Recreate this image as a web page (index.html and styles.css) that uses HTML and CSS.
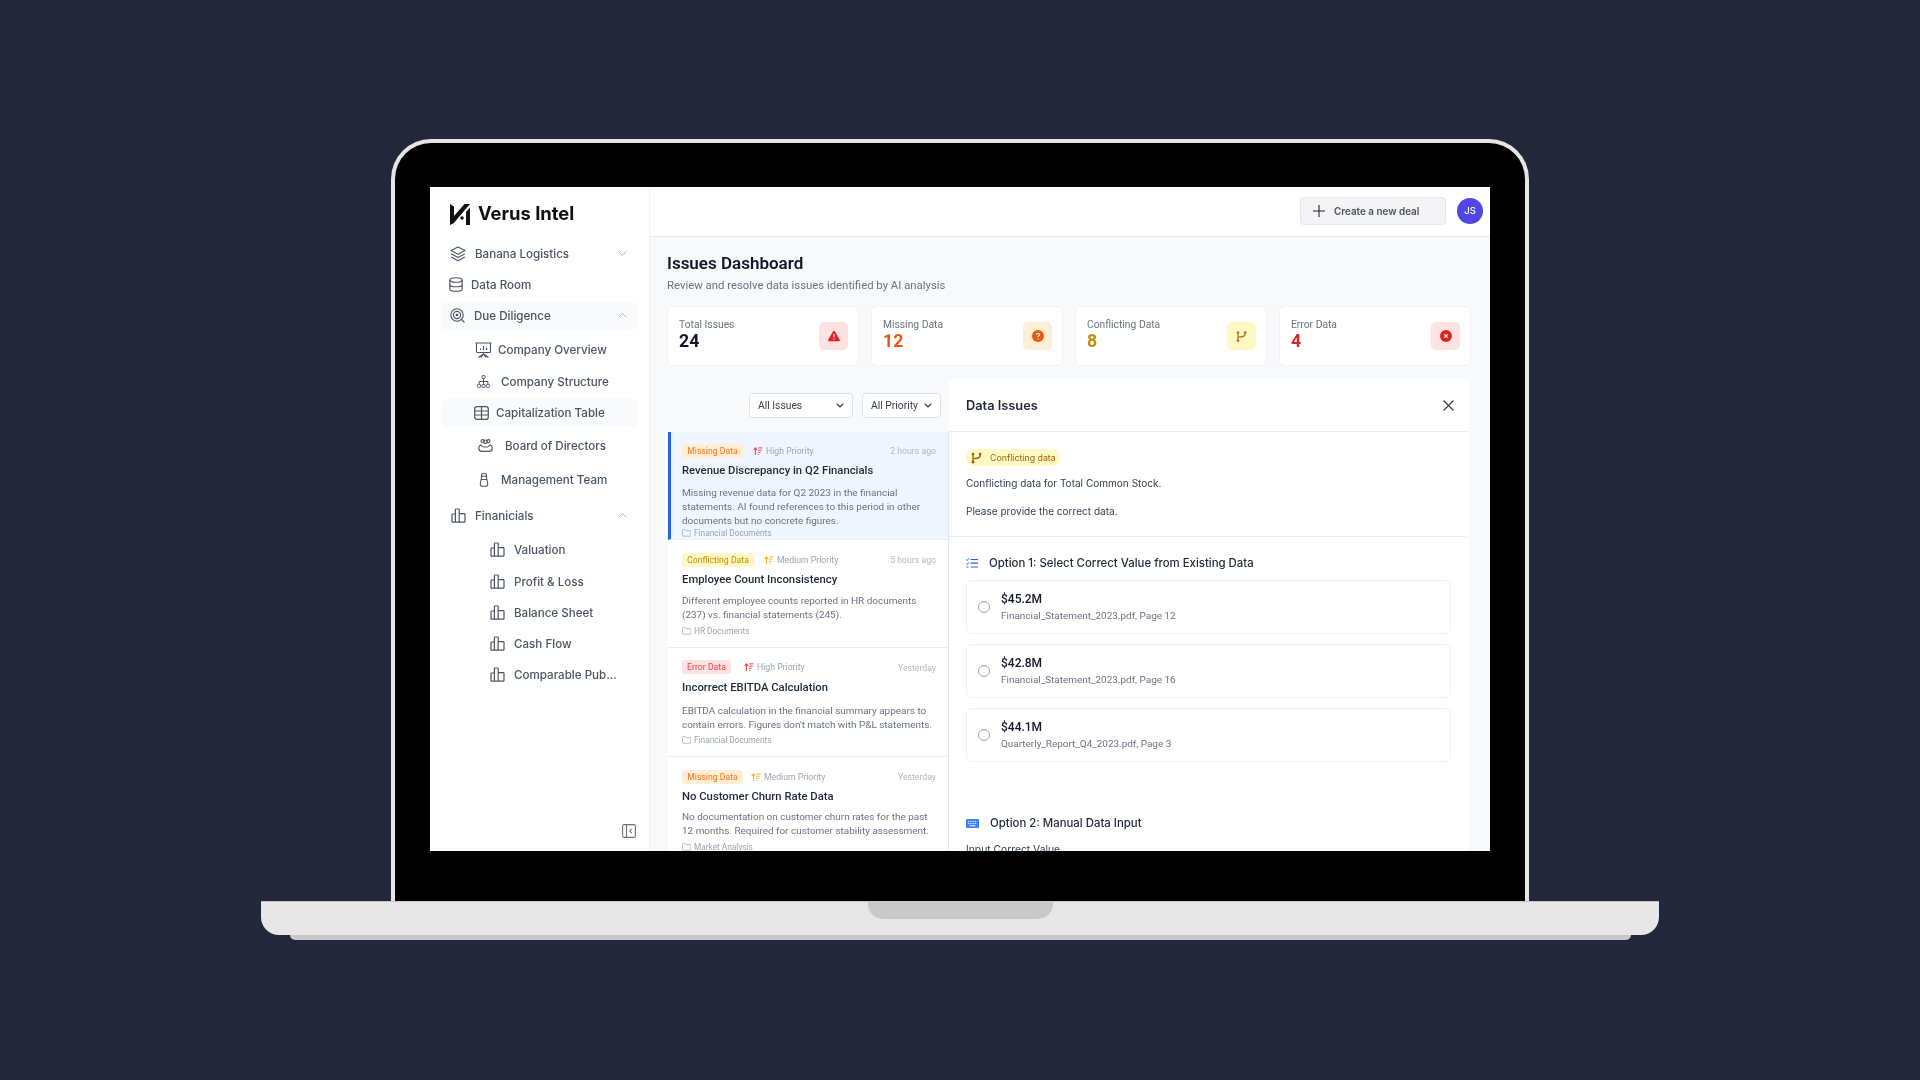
FILE: index.html
```html
<!DOCTYPE html>
<html lang="en">
<head>
<meta charset="utf-8">
<title>Verus Intel – Issues Dashboard</title>
<link rel="stylesheet" href="styles.css">
</head>
<body>
<svg class="defs" aria-hidden="true">
  <symbol id="i-bars" viewBox="0 0 15 15"><path d="M1 14.2V6.6c0-.4.2-.6.6-.6h2.2c.4 0 .6.2.6.6v7.6M4.4 14.2V1.6c0-.4.2-.6.6-.6h2.6c.4 0 .6.2.6.6v12.6M8.2 14.2V5.6h5c.5 0 .8.3.8.8v7.2c0 .4-.2.6-.6.6H1.6c-.4 0-.6-.2-.6-.6" fill="none" stroke="currentColor" stroke-width="1.2" stroke-linejoin="round"/></symbol>
  <symbol id="i-prio" viewBox="0 0 11 9"><path d="M2.6 9V1.5M.6 3.4 2.6 1l2 2.4" fill="none" stroke="currentColor" stroke-width="1.2"/><path d="M5.6 1h5M5.6 3.6h4M5.6 6.1h2.8M5.6 8.4h1.3" fill="none" stroke="currentColor" stroke-width="1.1"/></symbol>
  <symbol id="i-folder" viewBox="0 0 9 8"><path d="M.5 1.3c0-.4.3-.7.7-.7h2l.9 1h4c.4 0 .7.3.7.7v4.2c0 .4-.3.7-.7.7H1.2c-.4 0-.7-.3-.7-.7z" fill="none" stroke="currentColor" stroke-width=".7"/></symbol>
  <symbol id="i-branch" viewBox="0 0 12 13"><circle cx="2.2" cy="2.2" r="1.5"/><circle cx="2.2" cy="11" r="1.5"/><circle cx="10" cy="2.2" r="1.5"/><path d="M2.2 3v7M10 3c0 2.6-1.2 3.6-3.4 3.8L2.2 7.2" fill="none" stroke="currentColor" stroke-width="1.5"/></symbol>
</svg>

<div class="laptop">
  <div class="lid">
    <div class="screen">
      <aside class="sidebar">
        <div class="brand">
          <svg class="logo" viewBox="0 0 20 21"><path d="M0 0 4 2.4V12L14.5 0H20L3.6 19.2 0 21z" fill="#111"/><path d="M20 3.4V21h-4V8z" fill="#111"/><circle cx="12" cy="14" r="1.8" fill="#111"/></svg>
          <span class="brand-name">Verus Intel</span>
        </div>
        <nav class="nav">
          <div class="row pl9 g9">
            <svg class="ic w16" viewBox="0 0 16 16"><path d="M8 1 15 4.6 8 8.2 1 4.6zM1.2 7.8 8 11.4l6.8-3.6M1.2 11 8 14.8l6.8-3.8" fill="none" stroke="currentColor" stroke-width="1.1" stroke-linejoin="round"/></svg>
            <span>Banana Logistics</span>
            <svg class="chev" viewBox="0 0 9 5"><path d="M.5.5 4.5 4.5 8.5.5" fill="none" stroke="currentColor" stroke-width=".8"/></svg>
          </div>
          <div class="row pl8 g8">
            <svg class="ic w14" viewBox="0 0 14 15"><ellipse cx="7" cy="3" rx="6.2" ry="2.3" fill="none" stroke="currentColor" stroke-width="1.1"/><path d="M.8 3v9c0 1.3 2.8 2.3 6.2 2.3s6.200-1 6.200-2.300V3M.8 7.500c0 1.300 2.800 2.300 6.200 2.300s6.200-1 6.200-2.300" fill="none" stroke="currentColor" stroke-width="1.1"/></svg>
            <span>Data Room</span>
          </div>
          <div class="row pl9 g9 active">
            <svg class="ic w15" viewBox="0 0 15 15"><circle cx="7" cy="7" r="6.200" fill="none" stroke="currentColor" stroke-width="1.100"/><circle cx="7" cy="7" r="3.600" fill="none" stroke="currentColor" stroke-width="1.100"/><circle cx="7" cy="7" r="1.300" fill="currentColor"/><path d="m11.500 11.500 3 3" stroke="currentColor" stroke-width="1.100"/></svg>
            <span>Due Diligence</span>
            <svg class="chev" viewBox="0 0 9 5"><path d="M.5 4.500 4.500.5l4 4" fill="none" stroke="currentColor" stroke-width=".8"/></svg>
          </div>
          <div class="row pl34 g6 m6">
            <svg class="ic w17" viewBox="0 0 17 16"><path d="M.5 1h16M1.500 1v8.500c0 .6.400 1 1 1h12c.6 0 1-.4 1-1V1M8.500 10.500V12M3.500 15.500l5-3.500 5 3.500M6 15.500l2.500-3.500 2.500 3.500" fill="none" stroke="currentColor" stroke-width="1.100"/><path d="M5.500 8V6.500M8.500 8V4M11.500 8V5.500" fill="none" stroke="currentColor" stroke-width="1.200"/></svg>
            <span>Company Overview</span>
          </div>
          <div class="row pl36 g11 m4">
            <svg class="ic w13" viewBox="0 0 13 13"><rect x="5" y=".6" width="3" height="3" rx=".8" fill="none" stroke="currentColor"/><rect x=".6" y="9.400" width="3" height="3" rx=".8" fill="none" stroke="currentColor"/><rect x="5" y="9.400" width="3" height="3" rx=".8" fill="none" stroke="currentColor"/><rect x="9.400" y="9.400" width="3" height="3" rx=".8" fill="none" stroke="currentColor"/><path d="M6.500 3.600v5.800M2.100 9.400V6.500h8.800v2.900" fill="none" stroke="currentColor"/></svg>
            <span>Company Structure</span>
          </div>
          <div class="row pl33 g7 active">
            <svg class="ic w15" viewBox="0 0 15 14"><rect x=".7" y=".7" width="13.600" height="12.600" rx="2.200" fill="none" stroke="currentColor" stroke-width="1.200"/><path d="M.7 5h13.600M.7 9h13.600M7.500 .7v12.600" fill="none" stroke="currentColor" stroke-width="1.200"/></svg>
            <span>Capitalization Table</span>
          </div>
          <div class="row pl37 g12 m5">
            <svg class="ic w15" viewBox="0 0 15 13"><circle cx="4.600" cy="2.200" r="1.600" fill="none" stroke="currentColor" stroke-width="1.100"/><circle cx="10.400" cy="2.200" r="1.600" fill="none" stroke="currentColor" stroke-width="1.100"/><circle cx="7.500" cy="2.800" r="1.800" fill="none" stroke="currentColor" stroke-width="1.100"/><path d="M3 5.800C1.500 6.600.6 8 .8 9.600c.2 1.700 1.600 2.800 3.200 2.800h7c1.600 0 3-1.100 3.200-2.800.2-1.600-.7-3-2.200-3.800-.9.800-1.600 2.200-2.500 2.200H5.500C4.600 8 3.900 6.600 3 5.800z" fill="none" stroke="currentColor" stroke-width="1.100" stroke-linejoin="round"/></svg>
            <span>Board of Directors</span>
          </div>
          <div class="row pl38 g12 m6">
            <svg class="ic w10" viewBox="0 0 10 14"><path d="M2.800.7h4.400l.3 2.600h-5zM2.700 3.300 1.300 11c-.2 1.300.6 2.300 1.800 2.300h3.800c1.200 0 2-1 1.800-2.300L7.300 3.300M2.200 6.500h5.600" fill="none" stroke="currentColor" stroke-width="1.100" stroke-linejoin="round"/></svg>
            <span>Management Team</span>
          </div>
          <div class="row pl10 g9 m8">
            <svg class="ic w15" viewBox="0 0 15 15"><use href="#i-bars"/></svg>
            <span>Finanicials</span>
            <svg class="chev" viewBox="0 0 9 5"><path d="M.5 4.500 4.500.5l4 4" fill="none" stroke="currentColor" stroke-width=".8"/></svg>
          </div>
          <div class="row pl49 g9 m6"><svg class="ic w15" viewBox="0 0 15 15"><use href="#i-bars"/></svg><span>Valuation</span></div>
          <div class="row pl49 g9 m4"><svg class="ic w15" viewBox="0 0 15 15"><use href="#i-bars"/></svg><span>Profit &amp; Loss</span></div>
          <div class="row pl49 g9"><svg class="ic w15" viewBox="0 0 15 15"><use href="#i-bars"/></svg><span>Balance Sheet</span></div>
          <div class="row pl49 g9"><svg class="ic w15" viewBox="0 0 15 15"><use href="#i-bars"/></svg><span>Cash Flow</span></div>
          <div class="row pl49 g9"><svg class="ic w15" viewBox="0 0 15 15"><use href="#i-bars"/></svg><span>Comparable Pub...</span></div>
        </nav>
        <svg class="collapse" viewBox="0 0 14 14"><rect x=".6" y=".6" width="12.800" height="12.800" rx="1.500" fill="none" stroke="currentColor" stroke-width="1.100"/><path d="M4.500.6v12.800M9.800 4.800 7.800 7l2 2.200" fill="none" stroke="currentColor" stroke-width="1.100"/></svg>
      </aside>

      <div class="content">
        <header class="topbar">
          <button class="new-deal">
            <svg class="plus" viewBox="0 0 12 12"><path d="M6 0v12M0 6h12" stroke="currentColor" stroke-width="1.100"/></svg>
            <span>Create a new deal</span>
          </button>
          <div class="avatar">JS</div>
        </header>

        <main class="main">
          <h1 class="title">Issues Dashboard</h1>
          <p class="subtitle">Review and resolve data issues identified by AI analysis</p>

          <section class="stats">
            <div class="stat">
              <div class="stat-text"><div class="stat-label">Total Issues</div><div class="stat-value">24</div></div>
              <div class="stat-icon bg-red c-red"><svg class="w12" viewBox="0 0 12 11"><path d="M6 .3c.4 0 .7.2.9.5l4.800 8.400c.4.700-.1 1.500-.9 1.500H1.200c-.8 0-1.300-.8-.9-1.500L5.100.8c.2-.3.500-.5.900-.5z" fill="currentColor"/><path d="M6 3.500v3.200M6 7.900v1" stroke="#fff" stroke-width="1.100"/></svg></div>
            </div>
            <div class="stat">
              <div class="stat-text"><div class="stat-label">Missing Data</div><div class="stat-value c-orange">12</div></div>
              <div class="stat-icon bg-orange c-orange"><svg class="w12" viewBox="0 0 12 12"><circle cx="6" cy="6" r="6" fill="currentColor"/><path d="M4.400 4.700c0-1 .7-1.500 1.600-1.500s1.600.5 1.600 1.400c0 1.200-1.600 1.200-1.600 2.400M6 8.200v1" fill="none" stroke="#fff" stroke-width="1.100"/></svg></div>
            </div>
            <div class="stat">
              <div class="stat-text"><div class="stat-label">Conflicting Data</div><div class="stat-value c-yellow">8</div></div>
              <div class="stat-icon bg-yellow c-amber"><svg class="w11" viewBox="0 0 12 13" fill="currentColor"><use href="#i-branch"/></svg></div>
            </div>
            <div class="stat">
              <div class="stat-text"><div class="stat-label">Error Data</div><div class="stat-value c-red">4</div></div>
              <div class="stat-icon bg-red c-red"><svg class="w12" viewBox="0 0 12 12"><circle cx="6" cy="6" r="6" fill="currentColor"/><path d="m4.300 4.300 3.400 3.400m0-3.400L4.300 7.700" stroke="#fff" stroke-width="1.100"/></svg></div>
            </div>
          </section>

          <section class="workspace">
            <div class="left">
              <div class="filters">
                <div class="select s-issues"><span>All Issues</span><svg class="sel-chev" viewBox="0 0 8 5"><path d="M.7.7 4 4 7.300.7" fill="none" stroke="currentColor" stroke-width="1.100"/></svg></div>
                <div class="select s-priority"><span>All Priority</span><svg class="sel-chev" viewBox="0 0 8 5"><path d="M.7.7 4 4 7.300.7" fill="none" stroke="currentColor" stroke-width="1.100"/></svg></div>
              </div>
              <div class="list">
                <article class="issue selected">
                  <div class="meta"><span class="tag t-missing w61">Missing Data</span><span class="prio c-red-l g10"><svg class="prio-ic" viewBox="0 0 11 9"><use href="#i-prio"/></svg><em>High Priority</em></span><time>2 hours ago</time></div>
                  <h3 class="issue-title tt6">Revenue Discrepancy in Q2 Financials</h3>
                  <p class="issue-desc d8">Missing revenue data for Q2 2023 in the financial statements. AI found references to this period in other documents but no concrete figures.</p>
                  <div class="src sn1"><svg class="folder" viewBox="0 0 9 8"><use href="#i-folder"/></svg>Financial Documents</div>
                </article>
                <article class="issue">
                  <div class="meta"><span class="tag t-conf w72">Conflicting Data</span><span class="prio c-amber-l g10"><svg class="prio-ic" viewBox="0 0 11 9"><use href="#i-prio"/></svg><em>Medium Priority</em></span><time>5 hours ago</time></div>
                  <h3 class="issue-title tt6">Employee Count Inconsistency</h3>
                  <p class="issue-desc d7">Different employee counts reported in HR documents (237) vs. financial statements (245).</p>
                  <div class="src s3"><svg class="folder" viewBox="0 0 9 8"><use href="#i-folder"/></svg>HR Documents</div>
                </article>
                <article class="issue tall">
                  <div class="meta"><span class="tag t-err w49">Error Data</span><span class="prio c-red-l g13"><svg class="prio-ic" viewBox="0 0 11 9"><use href="#i-prio"/></svg><em>High Priority</em></span><time class="low">Yesterday</time></div>
                  <h3 class="issue-title tt7">Incorrect EBITDA Calculation</h3>
                  <p class="issue-desc d9">EBITDA calculation in the financial summary appears to contain errors. Figures don't match with P&amp;L statements.</p>
                  <div class="src s2"><svg class="folder" viewBox="0 0 9 8"><use href="#i-folder"/></svg>Financial Documents</div>
                </article>
                <article class="issue">
                  <div class="meta"><span class="tag t-missing w61">Missing Data</span><span class="prio c-amber-l g8"><svg class="prio-ic" viewBox="0 0 11 9"><use href="#i-prio"/></svg><em>Medium Priority</em></span><time>Yesterday</time></div>
                  <h3 class="issue-title tt6">No Customer Churn Rate Data</h3>
                  <p class="issue-desc d6">No documentation on customer churn rates for the past 12 months. Required for customer stability assessment.</p>
                  <div class="src s3"><svg class="folder" viewBox="0 0 9 8"><use href="#i-folder"/></svg>Market Analysis</div>
                </article>
              </div>
            </div>

            <div class="detail">
              <div class="detail-head">
                <h2>Data Issues</h2>
                <svg class="close" viewBox="0 0 11 11"><path d="m.5.5 10 10m0-10-10 10" stroke="currentColor" stroke-width="1.200"/></svg>
              </div>
              <div class="detail-intro">
                <div class="pill"><svg class="pill-ic" viewBox="0 0 12 13" fill="currentColor"><use href="#i-branch"/></svg>Conflicting data</div>
                <p class="intro-a">Conflicting data for Total Common Stock.</p>
                <p class="intro-b">Please provide the correct data.</p>
              </div>
              <div class="detail-options">
                <h4 class="opt-title">
                  <svg class="opt-ic" viewBox="0 0 12 10"><path d="M.3 1.500 1.300 2.500 2.800.5M.3 5.500 1.300 6.500 2.800 4.500M.5 9h2" fill="none" stroke="#2563eb" stroke-width="1"/><path d="M4.500 1.500H12M4.500 5.200H12M4.500 9H12" stroke="#2563eb" stroke-width="1.200"/></svg>
                  Option 1: Select Correct Value from Existing Data
                </h4>
                <label class="choice"><span class="radio"></span><span><b>$45.2M</b><small>Financial_Statement_2023.pdf, Page 12</small></span></label>
                <label class="choice"><span class="radio"></span><span><b>$42.8M</b><small>Financial_Statement_2023.pdf, Page 16</small></span></label>
                <label class="choice"><span class="radio"></span><span><b>$44.1M</b><small>Quarterly_Report_Q4_2023.pdf, Page 3</small></span></label>
                <h4 class="opt-title opt2">
                  <svg class="kbd-ic" viewBox="0 0 13 9"><rect width="13" height="9" rx="1.200" fill="#3b82f6"/><path d="M2 2.500h9M2 4.500h9" stroke="#fff" stroke-width=".9" stroke-dasharray="1 .8"/><path d="M3.500 6.800h6" stroke="#fff" stroke-width=".9"/></svg>
                  Option 2: Manual Data Input
                </h4>
                <div class="input-label">Input Correct Value</div>
              </div>
            </div>
          </section>
        </main>
      </div>
    </div>
  </div>
  <div class="base"><div class="notch"></div></div>
  <div class="foot"></div>
</div>
</body>
</html>
```

FILE: styles.css
```css
* { box-sizing: border-box; margin: 0; padding: 0; }
html, body { height: 100%; }
body { background: #23273a; font-family: "Inter", "Liberation Sans", sans-serif; overflow: hidden; }
.defs { position: absolute; width: 0; height: 0; }

.laptop { display: flex; flex-direction: column; align-items: center; padding-top: 139px; }
.lid { width: 1138px; height: 762px; border: 4px solid #e5e5e5; border-bottom: 0; border-radius: 40px 40px 0 0; background: #000; padding: 44px 0 0 35px; }
.base { position: relative; width: 1398px; height: 34px; background: #e7e7e7; border-top: 1px solid #c4c4c4; border-radius: 0 0 18px 18px; }
.notch { position: absolute; left: 607px; top: -1px; width: 185px; height: 18px; background: #c9c9c9; border-radius: 0 0 15px 15px; }
.foot { width: 1341px; height: 5px; background: #c8c8c8; border-radius: 0 0 5px 5px; }

.screen { display: flex; width: 1060px; height: 664px; overflow: hidden; background: #fff; filter: blur(.35px); }

/* Sidebar */
.sidebar { width: 220px; flex: none; display: flex; flex-direction: column; padding: 16px 11px 13px; border-right: 1px solid #f1f2f5; }
.brand { display: flex; align-items: center; gap: 8px; padding-left: 9px; height: 22px; margin-bottom: 14.5px; }
.logo { width: 20px; height: 21px; }
.brand-name { font-size: 18.4px; font-weight: 700; color: #111; margin-top: -2px; }
.nav { display: flex; flex-direction: column; gap: 3px; }
.row { display: flex; align-items: center; height: 28px; border-radius: 6px; font-size: 11.6px; font-weight: 500; color: #4b5563; }
.row.active { background: #f9fafb; }
.row span { white-space: nowrap; }
.ic { flex: none; color: #4b5563; height: auto; display: block; }
.chev { width: 9px; height: 5px; margin-left: auto; margin-right: 11px; color: #9ca3af; }
.collapse { width: 14px; height: 14px; margin-top: auto; margin-right: 2px; align-self: flex-end; color: #6b7280; }
.w10 { width: 10px; } .w13 { width: 13px; } .w14 { width: 14px; } .w15 { width: 15px; } .w16 { width: 16px; } .w17 { width: 17px; }
.pl8 { padding-left: 8px; } .pl9 { padding-left: 9px; } .pl10 { padding-left: 10px; } .pl33 { padding-left: 33px; } .pl34 { padding-left: 34px; } .pl36 { padding-left: 36px; } .pl37 { padding-left: 37px; } .pl38 { padding-left: 38px; } .pl49 { padding-left: 49px; }
.g6 { gap: 6px; } .g7 { gap: 7px; } .g8 { gap: 8px; } .g9 { gap: 9px; } .g11 { gap: 11px; } .g12 { gap: 12px; }
.m4 { margin-top: 1px; } .m5 { margin-top: 2px; } .m6 { margin-top: 3px; } .m8 { margin-top: 5px; }

/* Top bar */
.content { flex: 1; min-width: 0; display: flex; flex-direction: column; }
.topbar { height: 50px; flex: none; display: flex; align-items: center; justify-content: flex-end; gap: 11px; padding: 0 7px 2px 0; border-bottom: 1px solid #e5e7eb; background: #fff; }
.new-deal { width: 146px; height: 28px; display: flex; align-items: center; gap: 9px; padding-left: 12px; background: #f3f3f8; border: 1px solid #e5e7eb; border-radius: 4px; font: 600 9.9px "Inter", sans-serif; color: #4b5563; }
.plus { width: 12px; height: 12px; color: #1f2937; }
.avatar { width: 26px; height: 26px; border-radius: 50%; background: #4f46e5; color: #fff; font-size: 9.6px; font-weight: 500; display: flex; align-items: center; justify-content: center; }

/* Main */
.main { flex: 1; min-height: 0; display: flex; flex-direction: column; background: #f8f9fb; padding: 15px 18px 0 17px; font-family: "Roboto", sans-serif; }
.title { font-size: 17px; font-weight: 600; line-height: 22px; color: #111827; }
.subtitle { margin-top: 4px; font-size: 11.35px; line-height: 14px; color: #6b7280; }
.stats { display: flex; gap: 12px; margin-top: 14px; }
.stat { width: 192px; height: 60px; flex: none; display: flex; align-items: center; justify-content: space-between; padding: 0 10px 0 11px; background: #fff; border: 1px solid #eff0f3; border-radius: 6px; }
.stat-text { margin-top: -2px; }
.stat-label { font-size: 10.3px; line-height: 12px; color: #6b7280; }
.stat-value { font-size: 17.7px; font-weight: 700; line-height: 20px; color: #111827; }
.stat-icon { width: 29px; height: 28px; border-radius: 5px; display: flex; align-items: center; justify-content: center; }
.w11 { width: 11px; height: 13px; } .w12 { width: 12px; height: 12px; }
.bg-red { background: #fee2e2; } .bg-orange { background: #ffedd5; } .bg-yellow { background: #fef9c3; }
.c-red { color: #dc2626; } .c-orange { color: #ea580c; } .c-yellow { color: #ca8a04; } .c-amber { color: #b7791f; }

.workspace { flex: 1; min-height: 0; display: flex; margin-top: 13px; margin-right: 3px; overflow: hidden; }
.left { width: 282px; flex: none; padding-left: 1px; }
.filters { display: flex; justify-content: flex-end; gap: 9px; padding: 14px 8px 0 0; }
.select { height: 25px; display: flex; align-items: center; justify-content: space-between; padding: 0 8px; background: #fff; border: 1px solid #dfe2e7; border-radius: 4px; font-size: 10.3px; color: #374151; }
.s-issues { width: 104px; } .s-priority { width: 79px; }
.sel-chev { width: 8px; height: 5px; color: #1f2937; }
.list { margin-top: 14px; background: #fff; border-right: 1px solid #e5e7eb; }
.issue { height: 108px; padding: 13px 12px 0 14px; border-bottom: 1px solid #eceef1; overflow: hidden; }
.issue.tall { height: 109px; padding-top: 12px; }
.issue.selected { background: #eff6ff; border-left: 3px solid #2563eb; padding-top: 12px; padding-left: 11px; }
.issue:last-child { height: 94px; border-bottom: 0; }
.meta { display: flex; align-items: center; height: 14px; font-size: 8.7px; }
.tag { height: 14px; display: flex; align-items: center; justify-content: center; border-radius: 3px; font-size: 8.7px; white-space: nowrap; }
.w61 { width: 61px; } .w72 { width: 72px; } .w49 { width: 49px; }
.t-missing { background: #ffedd5; color: #f97316; } .t-conf { background: #fef9c3; color: #ca8a04; } .t-err { background: #fee2e2; color: #ef4444; }
.prio { display: flex; align-items: center; gap: 3px; }
.prio em { font-style: normal; color: #9ca3af; }
.prio-ic { width: 10px; height: 8px; }
.g10 { margin-left: 10px; } .g13 { margin-left: 13px; } .c-red-l { color: #ef4444; } .c-amber-l { color: #f5b324; }
.prio.g8 { margin-left: 8px; }
.meta time { margin-left: auto; color: #b1b6c0; }
.meta time.low { position: relative; top: 1px; }
.issue-title { font-size: 11.3px; font-weight: 500; line-height: 14px; color: #1f2937; }
.tt6 { margin-top: 6px; } .tt7 { margin-top: 7px; }
.issue-desc { font-size: 9.95px; line-height: 14px; color: #6b7280; }
.d6 { margin-top: 6px; } .d7 { margin-top: 7px; } .d8 { margin-top: 8px; } .d9 { margin-top: 9px; }
.src { display: flex; align-items: center; gap: 3px; height: 11px; font-size: 8.3px; color: #9ca3af; }
.sn1 { margin-top: -1px; } .s2 { margin-top: 2px; } .s3 { margin-top: 3px; }
.folder { width: 9px; height: 8px; }

.detail { width: 520px; flex: none; background: #fff; overflow: hidden; font-family: "Inter", sans-serif; }
.detail-head { height: 53px; display: flex; align-items: center; justify-content: space-between; padding: 0 15px 0 17px; border-bottom: 1px solid #e9ebee; }
.detail-head h2 { font-size: 12.8px; font-weight: 600; color: #1f2937; padding-top: 1px; }
.close { width: 11px; height: 11px; color: #374151; }
.detail-intro { margin-right: 3px; padding: 17px 0 18px 17px; border-bottom: 1px solid #e9ebee; }
.pill { width: 94px; height: 17px; display: flex; align-items: center; gap: 8px; padding-left: 5px; background: #fef9c3; border-radius: 9px; font-size: 8.8px; color: #a16207; }
.pill-ic { width: 11px; height: 12px; }
.intro-a { margin-top: 10px; font-size: 10.05px; line-height: 14px; color: #374151; }
.intro-b { margin-top: 14px; font-size: 10.05px; line-height: 14px; color: #374151; }
.detail-options { padding: 18px 18px 0 17px; }
.opt-title { display: flex; align-items: center; height: 16px; gap: 11px; font-size: 11.4px; font-weight: 500; color: #1f2937; }
.opt-ic { width: 12px; height: 10px; }
.kbd-ic { width: 13px; height: 9px; }
.choice { height: 54px; width: 485px; margin-top: 10px; display: flex; align-items: center; gap: 11px; padding-left: 11px; border: 1px solid #eff0f3; border-radius: 6px; font-family: "Roboto", sans-serif; }
.opt-title + .choice { margin-top: 9px; }
.radio { width: 12px; height: 12px; border: 1px solid #9ca3af; border-radius: 50%; flex: none; }
.choice b { display: block; margin-top: 1px; font-size: 12px; font-weight: 500; line-height: 14px; color: #111827; }
.choice small { display: block; margin-top: 3px; font-size: 9.95px; line-height: 14px; color: #6b7280; }
.opt2 { margin-top: 53px; }
.input-label { margin-top: 11px; font-size: 10.3px; line-height: 14px; color: #374151; }
```
